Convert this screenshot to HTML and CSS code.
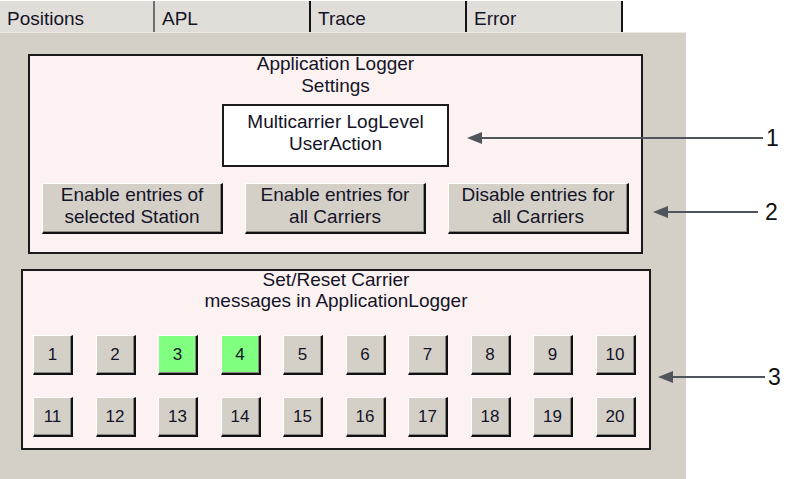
FILE: index.html
```html
<!DOCTYPE html>
<html lang="en">
<head>
    <meta charset="UTF-8">
    <title>APL</title>
    <link rel="stylesheet" href="styles.css">
</head>
<body>
    <div class="window">
        <div class="tabs">
            <div class="tab tab-first">Positions</div>
            <div class="tab">APL</div>
            <div class="tab">Trace</div>
            <div class="tab">Error</div>
        </div>

        <div class="panel">
            <section class="group group-settings">
                <div class="group-title">Application Logger<br>Settings</div>
                <div class="loglevel">Multicarrier LogLevel<br>UserAction</div>
                <div class="actions">
                    <button class="btn">Enable entries of<br>selected Station</button>
                    <button class="btn">Enable entries for<br>all Carriers</button>
                    <button class="btn">Disable entries for<br>all Carriers</button>
                </div>
            </section>

            <section class="group group-carriers">
                <div class="group-title carriers-title">Set/Reset Carrier<br>messages in ApplicationLogger</div>
                <div class="carrier-grid">
                    <button class="carrier">1</button>
                    <button class="carrier">2</button>
                    <button class="carrier active">3</button>
                    <button class="carrier active">4</button>
                    <button class="carrier">5</button>
                    <button class="carrier">6</button>
                    <button class="carrier">7</button>
                    <button class="carrier">8</button>
                    <button class="carrier">9</button>
                    <button class="carrier">10</button>
                    <button class="carrier">11</button>
                    <button class="carrier">12</button>
                    <button class="carrier">13</button>
                    <button class="carrier">14</button>
                    <button class="carrier">15</button>
                    <button class="carrier">16</button>
                    <button class="carrier">17</button>
                    <button class="carrier">18</button>
                    <button class="carrier">19</button>
                    <button class="carrier">20</button>
                </div>
            </section>
        </div>

        <!-- callouts drawn over the screenshot -->
        <svg class="callouts" width="799" height="479" viewBox="0 0 799 479">
            <g fill="#50555c" stroke="#50555c">
                <line x1="478" y1="138" x2="763" y2="138" stroke-width="2"/>
                <polygon points="467,138 482,132 482,144" stroke="none"/>
                <line x1="664" y1="212" x2="758" y2="212" stroke-width="2"/>
                <polygon points="653,212 668,206 668,218" stroke="none"/>
                <line x1="669" y1="377" x2="765" y2="377" stroke-width="2"/>
                <polygon points="658,377 673,371 673,383" stroke="none"/>
            </g>
            <g class="callout-label">
                <text x="766" y="146">1</text>
                <text x="765" y="220">2</text>
                <text x="768" y="385">3</text>
            </g>
        </svg>
    </div>
</body>
</html>
```

FILE: styles.css
```css
body {
    margin: 0;
    background-color: #ffffff;
    font-family: "Liberation Sans", Arial, sans-serif;
    color: #141428;
}

.window {
    position: relative;
    width: 799px;
    height: 479px;
}

.tabs {
    display: flex;
    height: 32px;
}

.tab {
    box-sizing: border-box;
    width: 156px;
    height: 31px;
    margin-top: 1px;
    padding: 7px 0 0 7px;
    background-color: #e1ded9;
    border-right: 2px solid #141414;
    font-size: 19px;
    line-height: 22px;
}

.tab-first {
    width: 155px;
    border-right-color: #6e6e6e;
}

.panel {
    width: 686px;
    height: 447px;
    background-color: #d4d0c8;
    border-top: 1px solid #ece9e4;
    box-sizing: border-box;
    overflow: hidden;
}

.group {
    box-sizing: border-box;
    background-color: #fdf2f2;
    border: 2px solid #1b1b1b;
    text-align: center;
    font-size: 19px;
}

.group-settings {
    width: 615px;
    height: 200px;
    margin: 21px 0 0 28px;
}

.group-carriers {
    width: 630px;
    height: 181px;
    margin: 15px 0 0 21px;
}

.group-title {
    margin-top: -3px;
    line-height: 22px;
}

.carriers-title {
    margin-top: -2px;
    line-height: 21px;
}

.loglevel {
    box-sizing: border-box;
    width: 227px;
    height: 63px;
    margin: 7px auto 0;
    padding: 5px 0 10px;
    background-color: #ffffff;
    border: 2px solid #1b1b1b;
    line-height: 22px;
}

.actions {
    display: flex;
    justify-content: center;
    gap: 22px;
    margin-top: 16px;
}

.btn,
.carrier {
    box-sizing: border-box;
    margin: 0;
    background-color: #d4d0c8;
    color: #141428;
    font-family: "Liberation Sans", Arial, sans-serif;
    border-style: solid;
    border-color: #ffffff #111111 #111111 #ffffff;
    border-width: 1px 2px 2px 1px;
    box-shadow: inset -1px -1px 0 #8c8984;
    cursor: pointer;
}

.btn {
    width: 181px;
    height: 51px;
    padding: 0;
    font-size: 19px;
    line-height: 22px;
    display: flex;
    flex-direction: column;
    align-items: center;
    justify-content: flex-start;
}

.carrier-grid {
    display: grid;
    grid-template-columns: repeat(10, 40px);
    column-gap: 22.5px;
    row-gap: 22px;
    margin-top: 24px;
    padding-left: 10px;
}

.carrier {
    width: 40px;
    height: 40px;
    padding: 0;
    font-size: 17px;
    line-height: 20px;
    text-align: center;
}

.carrier.active {
    background-color: #80ff80;
}

.callouts {
    position: absolute;
    left: 0;
    top: 0;
    pointer-events: none;
}

.callout-label {
    font-family: "Liberation Sans", Arial, sans-serif;
    font-size: 23px;
    fill: #111111;
}
```
